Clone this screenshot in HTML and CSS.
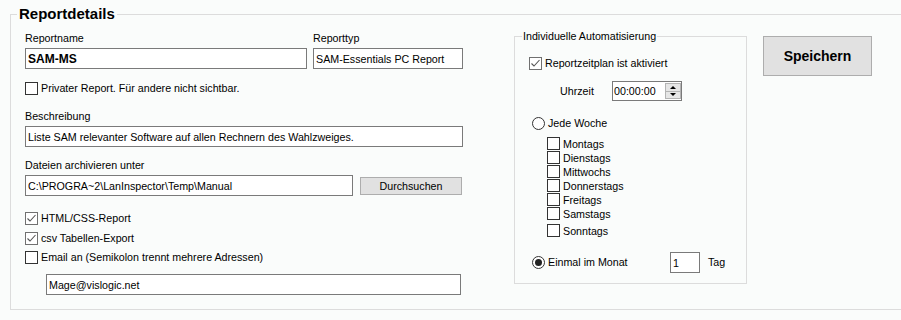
FILE: index.html
```html
<!DOCTYPE html>
<html lang="de">
<head>
  <meta charset="UTF-8" />
  <title>Reportdetails</title>
  <link rel="stylesheet" href="styles.css">
</head>
<body>
<fieldset class="report">
  <legend>Reportdetails</legend>
  <div class="layout">

    <!-- linke Spalte -->
    <div class="main">
      <div class="names">
        <div class="field">
          <label>Reportname</label>
          <input class="tb tb-name" value="SAM-MS">
        </div>
        <div class="field">
          <label>Reporttyp</label>
          <input class="tb tb-type" value="SAM-Essentials PC Report">
        </div>
      </div>

      <div class="check check-private"><span class="cb"></span>Privater Report. Für andere nicht sichtbar.</div>

      <label class="lbl lbl-desc">Beschreibung</label>
      <input class="tb tb-desc" value="Liste SAM relevanter Software auf allen Rechnern des Wahlzweiges.">

      <label class="lbl lbl-path">Dateien archivieren unter</label>
      <div class="path-row">
        <input class="tb tb-path" value="C:\PROGRA~2\LanInspector\Temp\Manual">
        <button class="btn-browse">Durchsuchen</button>
      </div>

      <div class="check check-html"><span class="cb on"><svg width="11" height="11" viewBox="0 0 11 11"><polyline points="1.5,5.5 4,8 9.5,2" fill="none" stroke="#555" stroke-width="1.1"/></svg></span>HTML/CSS-Report</div>
      <div class="check check-csv"><span class="cb on"><svg width="11" height="11" viewBox="0 0 11 11"><polyline points="1.5,5.5 4,8 9.5,2" fill="none" stroke="#555" stroke-width="1.1"/></svg></span>csv Tabellen-Export</div>
      <div class="check check-mail"><span class="cb"></span>Email an (Semikolon trennt mehrere Adressen)</div>
      <input class="tb tb-mail" value="Mage@vislogic.net">
    </div>

    <!-- Automatisierung -->
    <fieldset class="auto">
      <legend>Individuelle Automatisierung</legend>
      <div class="auto-body">
        <div class="check check-sched"><span class="cb on"><svg width="11" height="11" viewBox="0 0 11 11"><polyline points="1.5,5.5 4,8 9.5,2" fill="none" stroke="#555" stroke-width="1.1"/></svg></span>Reportzeitplan ist aktiviert</div>

        <div class="time-row">
          <span class="time-lbl">Uhrzeit</span>
          <div class="timebox">
            <input value="00:00:00">
            <span class="arrows">
              <span class="arr up"></span>
              <span class="arr down"></span>
            </span>
          </div>
        </div>

        <div class="check radio-week"><span class="rb"></span>Jede Woche</div>
        <div class="days">
          <div class="check day"><span class="cb"></span>Montags</div>
          <div class="check day"><span class="cb"></span>Dienstags</div>
          <div class="check day"><span class="cb"></span>Mittwochs</div>
          <div class="check day"><span class="cb"></span>Donnerstags</div>
          <div class="check day"><span class="cb"></span>Freitags</div>
          <div class="check day"><span class="cb"></span>Samstags</div>
          <div class="check day day-sun"><span class="cb"></span>Sonntags</div>
        </div>

        <div class="month-row">
          <div class="check"><span class="rb on"></span><span class="month-lbl">Einmal im Monat</span></div>
          <input class="tb tb-day" value="1">
          <span class="tag">Tag</span>
        </div>
      </div>
    </fieldset>

    <button class="btn-save">Speichern</button>
  </div>
</fieldset>
</body>
</html>
```

FILE: styles.css
```css
html, body {
  overflow: hidden;
}
body {
  margin: 0;
  background: #fafcfb;
  font-family: 'Liberation Sans', Arial, sans-serif;
  font-size: 10.7px;
  color: #000;
}

/* Gruppe Reportdetails */
.report {
  margin: 5px -10px 0 10px;
  padding: 0;
  border: 1px solid #dcdcdc;
  min-width: 0;
}
.report > legend {
  font-size: 15px;
  font-weight: bold;
  line-height: 18px;
  padding: 0 2px;
  margin-left: 6px;
}
.layout {
  display: flex;
  align-items: flex-start;
  padding: 7px 0 14px 14px;
}

/* linke Spalte */
.main {
  width: 438px;
  margin-top: 2px;
}
.names {
  display: flex;
  gap: 6px;
}
.field label,
.lbl {
  display: block;
  line-height: 13px;
  margin-bottom: 3px;
}
.tb {
  box-sizing: border-box;
  height: 21px;
  border: 1px solid #7a7a7a;
  background: #fff;
  padding: 0 2px;
  margin: 0;
  font-family: 'Liberation Sans', Arial, sans-serif;
  font-size: 10.7px;
  color: #000;
  outline: none;
  display: block;
}
.tb-name {
  width: 282px;
  font-weight: bold;
  font-size: 12px;
}
.tb-type {
  width: 150px;
}
.check {
  display: flex;
  align-items: center;
  gap: 3px;
  line-height: 13px;
}
.cb {
  box-sizing: border-box;
  width: 13px;
  height: 13px;
  border: 1px solid #333;
  background: #fff;
  flex: none;
  display: flex;
  align-items: center;
  justify-content: center;
}
.cb.on {
  border-color: #707070;
}
.rb {
  box-sizing: border-box;
  width: 13px;
  height: 13px;
  border: 1px solid #333;
  border-radius: 50%;
  background: #fff;
  flex: none;
  display: flex;
  align-items: center;
  justify-content: center;
}
.rb.on::after {
  content: "";
  width: 7px;
  height: 7px;
  border-radius: 50%;
  background: #222;
}
.check-private {
  margin-top: 13px;
}
.lbl-desc {
  margin-top: 15px;
}
.tb-desc {
  width: 438px;
}
.lbl-path {
  margin-top: 12px;
}
.path-row {
  display: flex;
  align-items: flex-start;
}
.tb-path {
  width: 328px;
}
.btn-browse {
  margin: 2px 0 0 7px;
  width: 102px;
  height: 18px;
  padding: 0;
  background: #e1e1e1;
  border: 1px solid #adadad;
  font-family: 'Liberation Sans', Arial, sans-serif;
  font-size: 10.7px;
  color: #000;
}
.check-html {
  margin-top: 16px;
}
.check-csv {
  margin-top: 7px;
}
.check-mail {
  margin-top: 6px;
}
.tb-mail {
  margin: 10px 0 0 21px;
  width: 415px;
}

/* Gruppe Automatisierung */
.auto {
  box-sizing: border-box;
  width: 233px;
  margin: 0 0 0 51px;
  padding: 0 0 10px 0;
  border: 1px solid #dcdcdc;
  min-width: 0;
}
.auto > legend {
  line-height: 13px;
  padding: 0 1px;
  margin-left: 7px;
}
.auto-body {
  padding-left: 14px;
}
.check-sched {
  margin-top: 14px;
}
.time-row {
  display: flex;
  align-items: center;
  margin-top: 11px;
}
.time-lbl {
  width: 52px;
  margin-left: 31px;
}
.timebox {
  box-sizing: border-box;
  width: 70px;
  height: 20px;
  border: 1px solid #7a7a7a;
  background: #fff;
  display: flex;
  align-items: center;
}
.timebox input {
  width: 48px;
  border: none;
  padding: 0 1px;
  margin: 0;
  font-family: 'Liberation Sans', Arial, sans-serif;
  font-size: 10.7px;
  background: transparent;
  outline: none;
}
.arrows {
  display: flex;
  flex-direction: column;
  width: 16px;
  height: 16px;
  margin-left: 2px;
}
.arr {
  flex: 1;
  box-sizing: border-box;
  background: #e6e6e6;
  border: 1px solid #b4b4b4;
  display: flex;
  align-items: center;
  justify-content: center;
}
.arr.down {
  border-top: none;
}
.arr.up::after,
.arr.down::after {
  content: "";
  border-left: 3px solid transparent;
  border-right: 3px solid transparent;
}
.arr.up::after {
  border-bottom: 3px solid #000;
}
.arr.down::after {
  border-top: 3px solid #000;
}
.radio-week {
  margin: 16px 0 0 3px;
}
.days {
  margin: 7px 0 0 18px;
}
.day {
  height: 14px;
  line-height: 14px;
  align-items: flex-start;
}
.day-sun {
  margin-top: 3px;
}
.month-row {
  display: flex;
  align-items: center;
  margin: 14px 0 0 3px;
}
.month-lbl {
  width: 122px;
}
.tb-day {
  width: 30px;
}
.tag {
  margin: -2px 0 0 8px;
}

.btn-save {
  margin: 6px 0 0 16px;
  width: 109px;
  height: 40px;
  padding: 0;
  background: #e1e1e1;
  border: 1px solid #adadad;
  font-family: 'Liberation Sans', Arial, sans-serif;
  font-size: 14px;
  font-weight: bold;
  color: #000;
}
```
